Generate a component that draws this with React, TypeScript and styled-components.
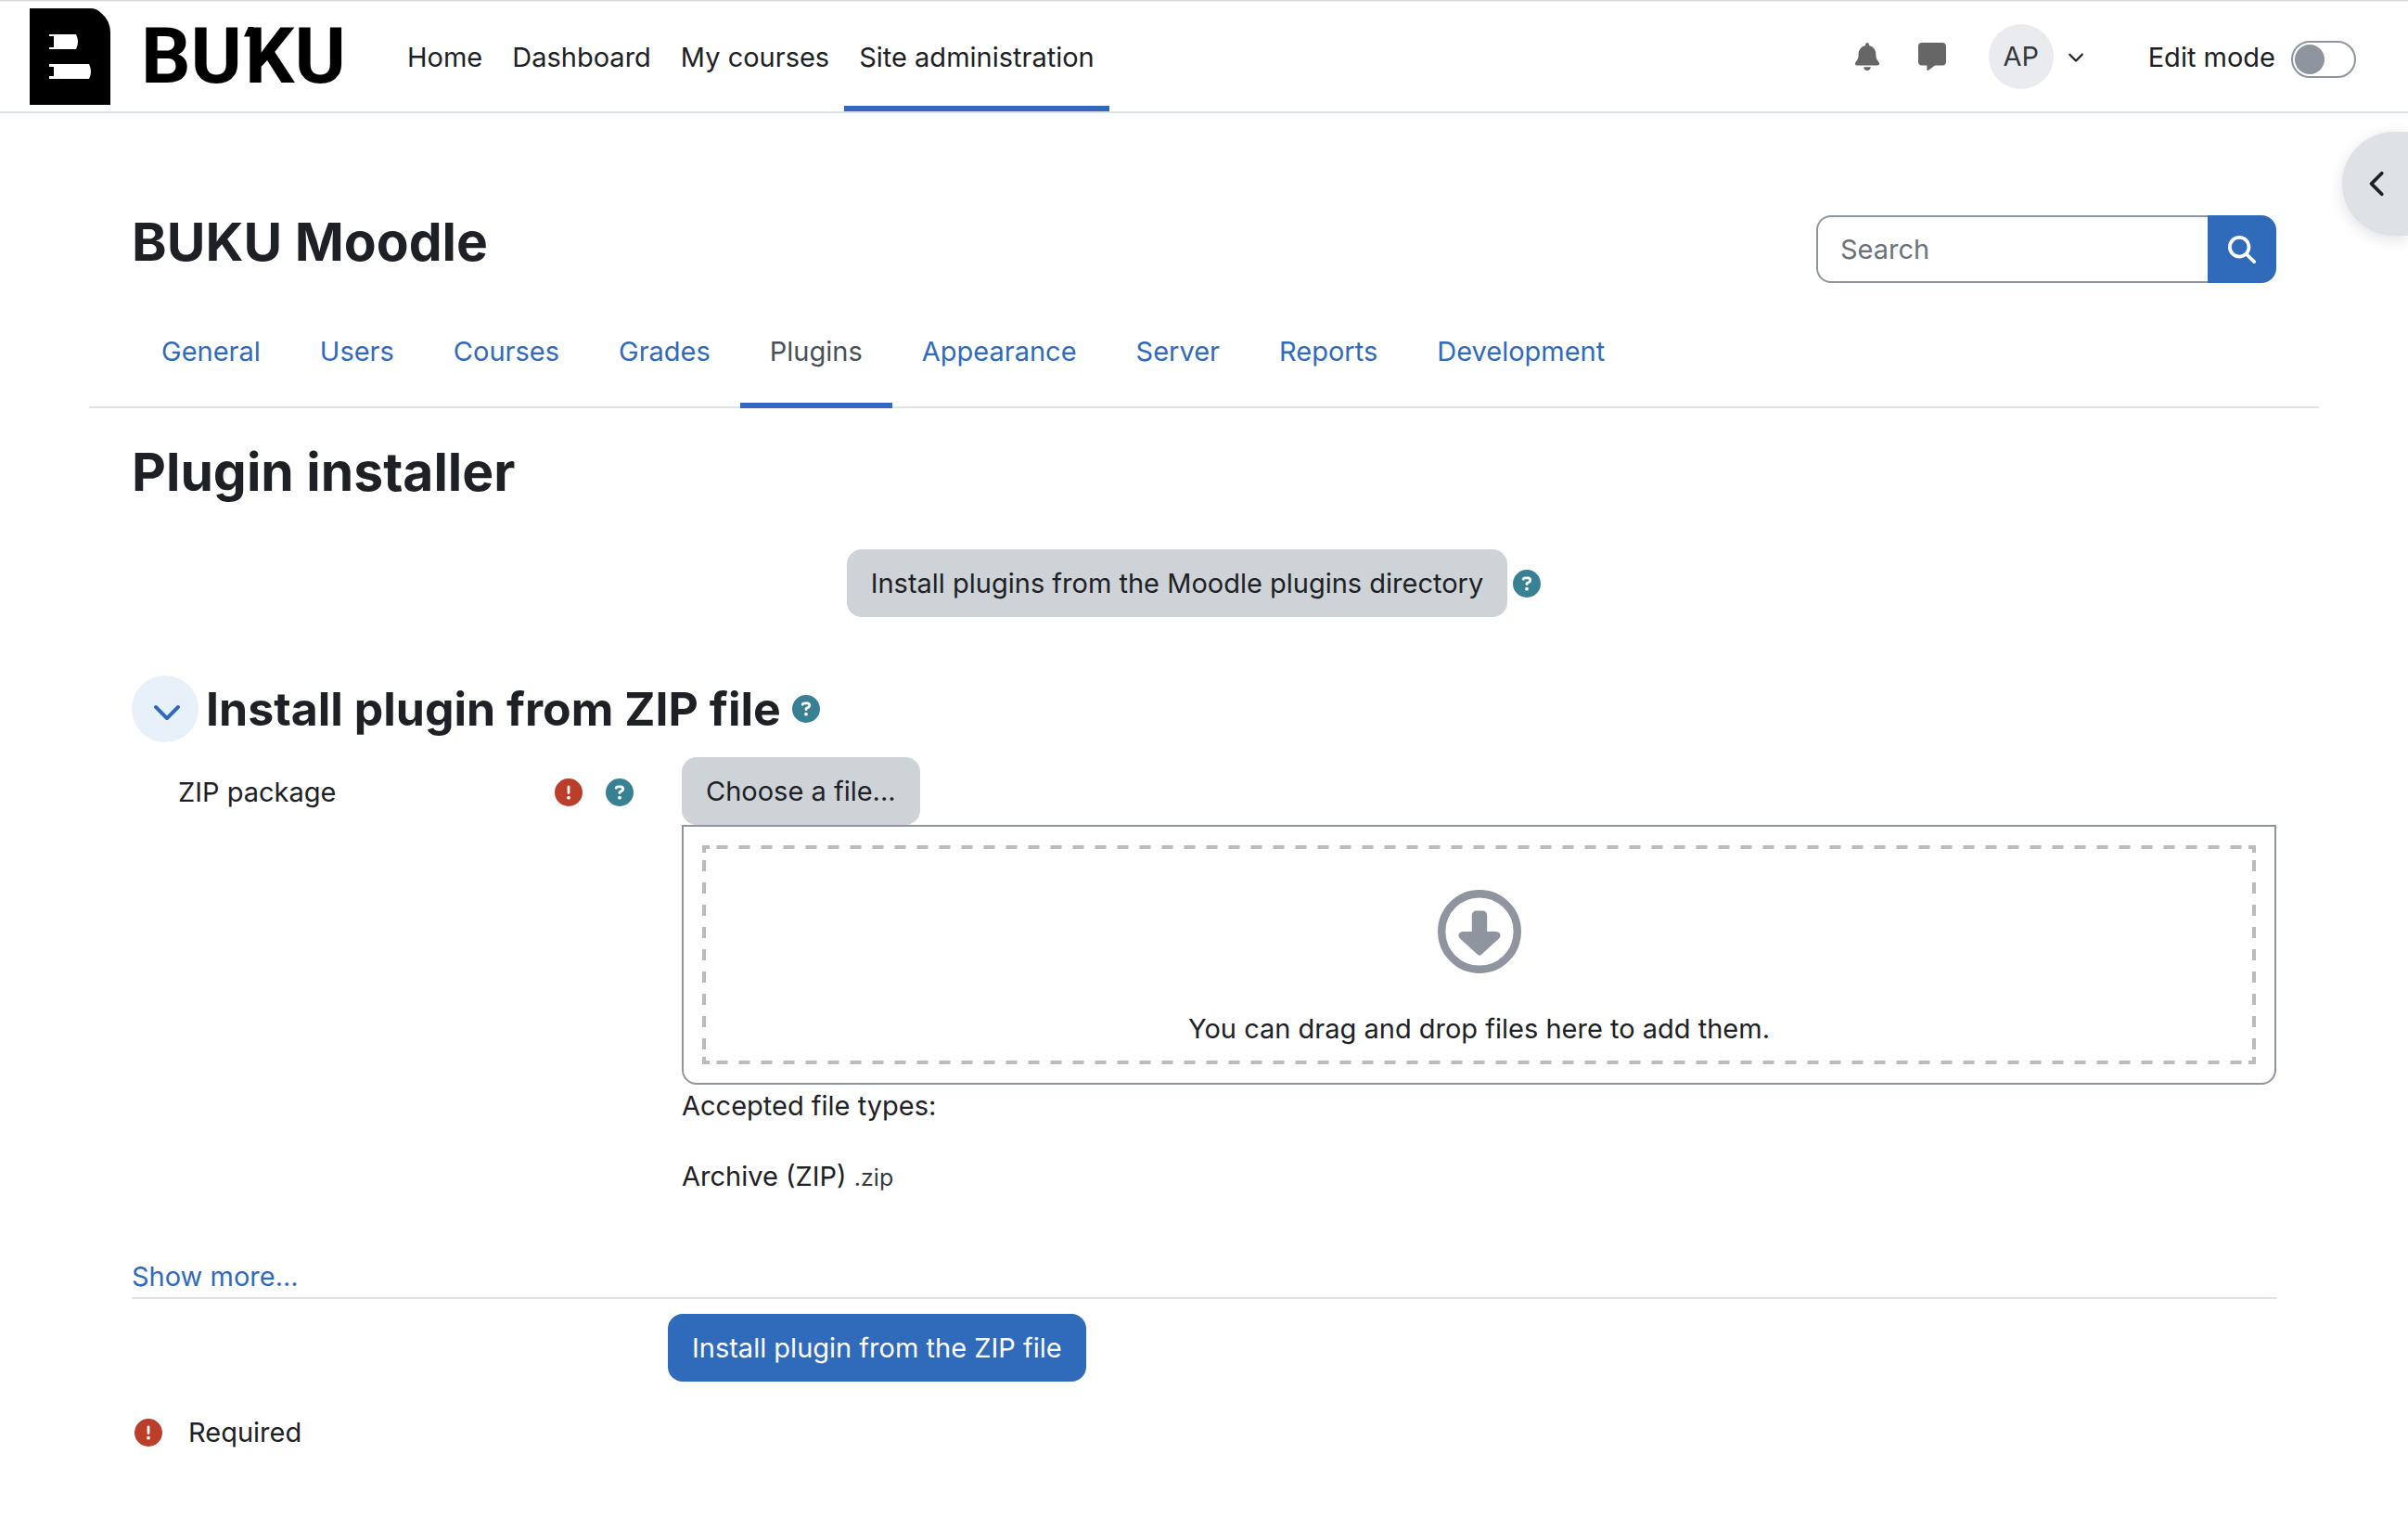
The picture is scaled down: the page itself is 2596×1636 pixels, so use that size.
import React, { useState } from "react";
import styled, { createGlobalStyle } from "styled-components";
import {
  FaBell,
  FaMessage,
  FaChevronDown,
  FaChevronLeft,
  FaMagnifyingGlass,
  FaCircleQuestion,
  FaCircleExclamation,
} from "react-icons/fa6";

const color = {
  text: "#1d2125",
  primary: "#306aba",
  grey: "#ced3d7",
  line: "#dee2e6",
  border: "#8f959e",
  help: "#388094",
  danger: "#bb3e2b",
};

const GlobalStyle = createGlobalStyle`
  *, *::before, *::after { box-sizing: border-box; }
  body {
    margin: 0;
    background: #fff;
    color: ${color.text};
    font-family: Inter, Roboto, sans-serif;
    font-size: 29px;
    line-height: 45px;
  }
  button, input { font: inherit; color: inherit; }
  h1, h2, h3, p { margin: 0; }
  svg { display: block; flex: none; }
`;

const Header = styled.header`
  display: flex;
  align-items: stretch;
  height: 122px;
  padding: 0 56px 0 32px;
  border-top: 1px solid #d6d6d6;
  border-bottom: 2px solid ${color.line};
  box-shadow: inset 0 1px #f0f0f0;
`;

const Brand = styled.a`
  display: flex;
  align-items: center;
  gap: 33px;
  min-width: 391px;
  color: #000;
  text-decoration: none;
`;

const BrandName = styled.span`
  font-family: Roboto, sans-serif;
  font-size: 84px;
  font-weight: 700;
  line-height: 96px;
`;

const FlaggedLetter = styled.span`
  position: relative;
  padding-left: 3px;
  &::before {
    content: "";
    position: absolute;
    top: 18px;
    left: 2px;
    width: 10px;
    height: 11px;
    background: #000;
    clip-path: polygon(50% 0, 100% 0, 100% 100%, 0 100%);
  }
`;

const PrimaryNav = styled.nav`
  display: flex;
`;

const PrimaryLink = styled.a<{ $active?: boolean }>`
  display: flex;
  align-items: center;
  padding: 8px 16px 0;
  border-bottom: 6px solid ${(p) => (p.$active ? color.primary : "transparent")};
  color: inherit;
  text-decoration: none;
`;

const UserTools = styled.div`
  display: flex;
  align-items: center;
  margin-left: auto;
`;

const PlainButton = styled.button`
  display: flex;
  align-items: center;
  padding: 0;
  border: 0;
  background: none;
  cursor: pointer;
`;

const ToolButton = styled(PlainButton)`
  margin-right: 40px;
  color: #666;
`;

const UserButton = styled(PlainButton)`
  gap: 15px;
  margin: 0 69px 0 6px;
`;

const Avatar = styled.span`
  display: grid;
  place-items: center;
  width: 70px;
  height: 70px;
  border-radius: 50%;
  background: #e9ebef;
  color: #343a40;
`;

const EditMode = styled.label`
  display: flex;
  align-items: center;
  gap: 17px;
  padding-top: 2px;
`;

const Switch = styled.input`
  appearance: none;
  display: flex;
  align-items: center;
  width: 70px;
  height: 40px;
  margin: 4px 0 0;
  padding: 0 2px;
  border: 2px solid ${color.border};
  border-radius: 20px;
  &::before {
    content: "";
    width: 32px;
    height: 32px;
    border-radius: 50%;
    background: ${color.border};
  }
  &:checked {
    justify-content: flex-end;
  }
`;

const DrawerToggle = styled.button`
  position: absolute;
  top: 142px;
  right: 0;
  display: flex;
  align-items: center;
  width: 71px;
  height: 112px;
  padding: 0 0 0 24px;
  border: 0;
  border-radius: 56px 0 0 56px;
  background: ${color.line};
  box-shadow: 0 4px 16px rgba(0, 0, 0, 0.12);
`;

const Page = styled.main`
  padding: 102px 142px 60px;
`;

const TitleRow = styled.div`
  display: flex;
  justify-content: space-between;
  align-items: flex-start;
`;

const Heading = styled.h1`
  font-size: 57px;
  font-weight: 700;
  line-height: 74px;
  margin-bottom: -2px;
`;

const SearchForm = styled.form`
  display: flex;
  margin-top: 8px;
`;

const SearchInput = styled.input`
  width: 422px;
  height: 73px;
  padding: 0 24px;
  border: 2px solid ${color.border};
  border-right: 0;
  border-radius: 16px 0 0 16px;
  outline: 0;
  background: #fff;
  &::placeholder {
    color: #6a737b;
    opacity: 1;
  }
`;

const SearchButton = styled.button`
  display: grid;
  place-items: center;
  width: 74px;
  height: 73px;
  padding: 0;
  border: 0;
  border-radius: 0 16px 16px 0;
  background: ${color.primary};
  color: #fff;
`;

const Tabs = styled.nav`
  display: flex;
  margin: 15px -46px 32px;
  padding: 0 46px;
  box-shadow: inset 0 -2px ${color.line};
`;

const Tab = styled.a<{ $active?: boolean }>`
  padding: 36px 32px 33px;
  border-bottom: 6px solid ${(p) => (p.$active ? color.primary : "transparent")};
  color: ${(p) => (p.$active ? "#495057" : color.primary)};
  text-decoration: none;
`;

const Button = styled.button<{ $primary?: boolean }>`
  padding: 14px 26px;
  border: 0;
  border-radius: 16px;
  background: ${(p) => (p.$primary ? color.primary : color.grey)};
  color: ${(p) => (p.$primary ? "#fff" : color.text)};
`;

const DirectoryRow = styled.div`
  display: flex;
  justify-content: center;
  align-items: center;
  gap: 6px;
  margin: 48px 0 63px;
  padding-right: 22px;
`;

const HelpButton = styled(PlainButton)`
  color: ${color.help};
`;

const SectionHead = styled.div`
  display: flex;
  align-items: center;
  margin-bottom: 16px;
`;

const Collapse = styled.button`
  display: grid;
  place-items: center;
  width: 72px;
  height: 72px;
  margin-right: 8px;
  padding: 4px 0 0 4px;
  border: 0;
  border-radius: 50%;
  background: #e8f0f9;
  color: ${color.primary};
`;

const SectionTitle = styled.h3`
  margin-right: 12px;
  font-size: 50px;
  font-weight: 700;
  line-height: 60px;
`;

const FieldRow = styled.div`
  display: grid;
  grid-template-columns: 1fr 3fr;
  gap: 20px;
`;

const FieldLabel = styled.div`
  display: flex;
  align-items: center;
  align-self: start;
  gap: 25px;
  padding: 15px 32px 0 50px;
`;

const LabelText = styled.label`
  margin-right: auto;
`;

const Required = styled.span`
  display: flex;
  color: ${color.danger};
`;

const DropZone = styled.div`
  padding: 20px;
  border: 2px solid ${color.border};
  border-radius: 0 0 16px 16px;
`;

const dash = "#bbb 25% 75%, transparent 75%";
const solid = "linear-gradient(#bbb, #bbb)";

const DropArea = styled.div`
  display: flex;
  flex-direction: column;
  align-items: center;
  gap: 37px;
  padding: 48px 4px 16px;
  background:
    linear-gradient(90deg, transparent 25%, ${dash}) top center / 24px 4px repeat-x,
    linear-gradient(90deg, transparent 25%, ${dash}) bottom center / 24px 4px repeat-x,
    linear-gradient(transparent 25%, ${dash}) left center / 4px 24px repeat-y,
    linear-gradient(transparent 25%, ${dash}) right center / 4px 24px repeat-y,
    ${solid} top left / 8px 4px no-repeat,
    ${solid} top left / 4px 8px no-repeat,
    ${solid} top right / 8px 4px no-repeat,
    ${solid} top right / 4px 8px no-repeat,
    ${solid} bottom left / 8px 4px no-repeat,
    ${solid} bottom left / 4px 8px no-repeat,
    ${solid} bottom right / 8px 4px no-repeat,
    ${solid} bottom right / 4px 8px no-repeat;
`;

const FileType = styled.p`
  margin-top: 31px;
`;

const Extension = styled.small`
  font-size: 25px;
  color: #343a40;
`;

const MoreRow = styled.div`
  margin: 62px 0 16px;
  border-bottom: 2px solid ${color.line};
  line-height: 44px;
`;

const TextLink = styled.a`
  color: ${color.primary};
  text-decoration: none;
`;

const SubmitRow = styled.div`
  padding-left: 25%;
`;

const RequiredNote = styled.p`
  display: flex;
  align-items: center;
  gap: 28px;
  margin-top: 32px;
  padding-left: 3px;
`;

const LogoMark = () => (
  <svg width="87" height="104" viewBox="0 0 87 104" aria-hidden="true">
    <path d="M0 0H66Q72 0 77 5Q87 13 87 26V104H0Z" fill="#000" />
    <path d="M21 28H50Q54 36 50 44H21V42H26V30H21Z" fill="#fff" />
    <path d="M21 60H64Q68 68 64 76H21V73H26V63H21Z" fill="#fff" />
  </svg>
);

const DropArrow = () => (
  <svg width="90" height="90" viewBox="0 0 90 90" aria-hidden="true">
    <circle cx="45" cy="45" r="40.8" fill="none" stroke="#8f959e" strokeWidth="8.4" />
    <path
      d="M42 22.5H48Q53.2 22.5 53.2 28V45H63Q67.5 45.4 67.5 49.5Q67.3 51 66 52.4L46.8 70Q45 71.4 43.2 70L24 52.4Q22.7 51 22.5 49.5Q22.5 45.4 27 45H36.8V28Q36.8 22.5 42 22.5Z"
      fill="#8f959e"
    />
  </svg>
);

const Help = () => (
  <HelpButton type="button" aria-label="Help">
    <FaCircleQuestion size={30} />
  </HelpButton>
);

const navItems = ["Home", "Dashboard", "My courses", "Site administration"];
const tabs = ["General", "Users", "Courses", "Grades", "Plugins", "Appearance", "Server", "Reports", "Development"];

export default function App() {
  const [editing, setEditing] = useState(false);
  return (
    <>
      <GlobalStyle />
      <Header>
        <Brand href="#" aria-label="BUKU">
          <LogoMark />
          <BrandName>
            BU<FlaggedLetter>K</FlaggedLetter>U
          </BrandName>
        </Brand>
        <PrimaryNav>
          {navItems.map((item) => (
            <PrimaryLink key={item} href="#" $active={item === "Site administration"}>
              {item}
            </PrimaryLink>
          ))}
        </PrimaryNav>
        <UserTools>
          <ToolButton type="button" aria-label="Notifications">
            <FaBell size={30} />
          </ToolButton>
          <ToolButton type="button" aria-label="Messages">
            <FaMessage size={30} />
          </ToolButton>
          <UserButton type="button">
            <Avatar>AP</Avatar>
            <FaChevronDown size={18} />
          </UserButton>
          <EditMode>
            Edit mode
            <Switch type="checkbox" checked={editing} onChange={() => setEditing(!editing)} />
          </EditMode>
        </UserTools>
      </Header>
      <DrawerToggle type="button" aria-label="Open block drawer">
        <FaChevronLeft size={30} />
      </DrawerToggle>
      <Page>
        <TitleRow>
          <Heading>BUKU Moodle</Heading>
          <SearchForm>
            <SearchInput type="text" placeholder="Search" aria-label="Search" />
            <SearchButton type="button" aria-label="Search">
              <FaMagnifyingGlass size={30} />
            </SearchButton>
          </SearchForm>
        </TitleRow>
        <Tabs>
          {tabs.map((tab) => (
            <Tab key={tab} href="#" $active={tab === "Plugins"}>
              {tab}
            </Tab>
          ))}
        </Tabs>
        <Heading as="h2">Plugin installer</Heading>
        <DirectoryRow>
          <Button type="button">Install plugins from the Moodle plugins directory</Button>
          <Help />
        </DirectoryRow>
        <SectionHead>
          <Collapse type="button" aria-label="Collapse section">
            <FaChevronDown size={32} />
          </Collapse>
          <SectionTitle>Install plugin from ZIP file</SectionTitle>
          <Help />
        </SectionHead>
        <FieldRow>
          <FieldLabel>
            <LabelText htmlFor="zip-package">ZIP package</LabelText>
            <Required>
              <FaCircleExclamation size={30} />
            </Required>
            <Help />
          </FieldLabel>
          <div>
            <Button type="button" id="zip-package">
              Choose a file...
            </Button>
            <DropZone>
              <DropArea>
                <DropArrow />
                <p>You can drag and drop files here to add them.</p>
              </DropArea>
            </DropZone>
            <p>Accepted file types:</p>
            <FileType>
              Archive (ZIP) <Extension>.zip</Extension>
            </FileType>
          </div>
        </FieldRow>
        <MoreRow>
          <TextLink href="#">Show more...</TextLink>
        </MoreRow>
        <SubmitRow>
          <Button type="submit" $primary>
            Install plugin from the ZIP file
          </Button>
        </SubmitRow>
        <RequiredNote>
          <Required>
            <FaCircleExclamation size={30} />
          </Required>
          Required
        </RequiredNote>
      </Page>
    </>
  );
}
